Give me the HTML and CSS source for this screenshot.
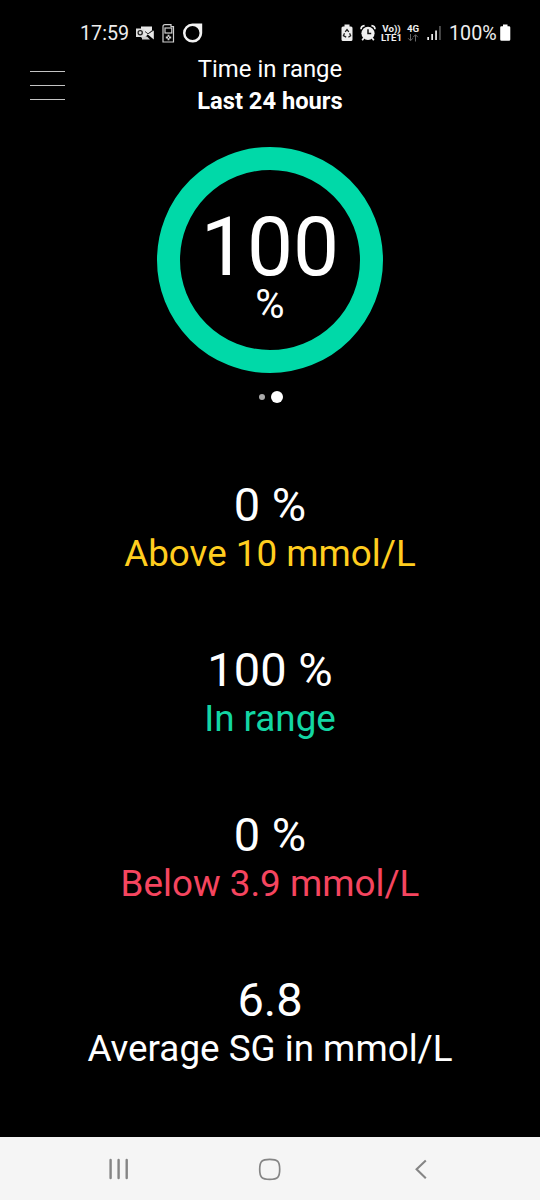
FILE: index.html
```html
<!DOCTYPE html>
<html lang="en">
<head>
<meta charset="utf-8">
<title>Time in range</title>
<link rel="stylesheet" href="styles.css">
</head>
<body>
<div class="screen">
  <div class="status">
    <span class="clock">17:59</span>
    <svg class="mail" width="18" height="22" viewBox="0 0 18 22">
      <path fill="#e8e8e8" d="M5 4.500h11v4l-3.500 3-3.500 4H5z"/>
      <path fill="#e8e8e8" d="M11.500 12.300L17.800 8.500v9z"/>
      <path fill="#ccc" d="M6 14.500h5l3 3H6z"/>
      <path d="M9 9.500l3 2.300 5-3.600" fill="none" stroke="#333" stroke-width="1"/>
      <rect x="0" y="6.500" width="8.500" height="8.500" fill="#ddd"/>
      <circle cx="4.200" cy="10.800" r="2.100" fill="none" stroke="#222" stroke-width="1.300"/>
    </svg>
    <svg class="pump" width="13" height="22" viewBox="0 0 13 22" fill="none" stroke="#d0d0d0">
      <path d="M1 4.500Q1 2.600 3 2.600h6v2h2.500V20H1z" stroke-width="1.200"/>
      <rect x="3" y="6" width="6.800" height="5" stroke-width="1.200"/>
      <path d="M6.500 12.800v5.400M3.800 15.500h5.400" stroke-width="1.800"/>
      <path d="M6.500 14.800v1.400" stroke="#000" stroke-width="1"/>
    </svg>
    <svg class="drop" width="20" height="22" viewBox="0 0 20 22">
      <path fill="#f2f2f2" fill-rule="evenodd" d="M9.500 1.500h9.700v9A9.600 9.500 0 1 1 9.500 1.500zM9.500 4a7 7 0 1 0 0 14 7 7 0 0 0 0-14z"/>
    </svg>
    <svg class="care" width="12" height="22" viewBox="0 0 12 22">
      <path fill="#eee" d="M3.500 2.500h5v2H10q1.500 0 1.500 1.500v11.500Q11.500 19 10 19H2Q.5 19 .5 17.500V6Q.5 4.500 2 4.500h1.500z"/>
      <path d="M4.200 9.800L6 7.600l1.800 2.200M8.600 11.300l1 2.400-2.200 1.500M3.500 11.300l-1.100 2.400 2.800 1.400" fill="none" stroke="#222" stroke-width="1.300"/>
    </svg>
    <svg class="alarm" width="16" height="22" viewBox="0 0 16 22">
      <circle cx="8" cy="11.300" r="6.600" fill="#f0f0f0"/>
      <path d="M1 7.200Q1 4 4.600 3.600M15 7.200Q15 4 11.400 3.600M3.800 16l-1.600 2.300M12.200 16l1.600 2.300" fill="none" stroke="#f0f0f0" stroke-width="1.700"/>
      <path d="M8 7.300v4.300h3.200" fill="none" stroke="#111" stroke-width="1.500"/>
    </svg>
    <span class="volte"><span>Vo))</span><span>LTE1</span></span>
    <span class="net"><span>4G</span>
      <svg width="12" height="8" viewBox="0 0 12 8" fill="none" stroke="#666"><path d="M3.500 0v6.500M1.200 4.300l2.300 2.500 2.300-2.500M8.500 7.500V1M6.200 3.200L8.500.7l2.300 2.500"/></svg>
    </span>
    <svg class="signal" width="15" height="22" viewBox="0 0 15 22">
      <path fill="#eee" d="M.3 15H2v3H.3zM4.300 12H6v6H4.300zM8.200 8.500h1.700V18H8.200z"/><path fill="#555" d="M12.100 4h1.700v14h-1.700z"/>
    </svg>
    <span class="charge">100%</span>
    <svg class="battery" width="11" height="22" viewBox="0 0 11 22">
      <path fill="#fff" d="M3 2.500h4.500v1.800H9q1.300 0 1.300 1.300v11.900q0 1.300-1.300 1.300H1.500Q.2 18.800.2 17.500V5.600q0-1.300 1.300-1.300H3z"/>
    </svg>
  </div>
  <header class="header">
    <div class="menu"><i></i><i></i><i></i></div>
    <div class="title"><div>Time in range</div><div class="period">Last 24 hours</div></div>
  </header>
  <div class="ring">
    <div class="total">100</div>
    <div class="unit">%</div>
  </div>
  <div class="dots"><i class="dot"></i><i class="dot active"></i></div>
  <main class="stats">
    <div><div class="value">0 %</div><div class="label above">Above 10 mmol/L</div></div>
    <div><div class="value">100 %</div><div class="label within">In range</div></div>
    <div><div class="value">0 %</div><div class="label below">Below 3.9 mmol/L</div></div>
    <div><div class="value">6.8</div><div class="label">Average SG in mmol/L</div></div>
  </main>
  <nav class="nav">
    <svg width="24" height="24" viewBox="0 0 24 24"><path d="M3.600 3v18M11.600 3v18M19.700 3v18" stroke="#858585" stroke-width="2.400" stroke-linecap="round"/></svg>
    <svg width="24" height="24" viewBox="0 0 24 24"><path d="M11.700 2.300C19.700 2.300 21.700 4.300 21.700 12.300S19.700 22.300 11.700 22.300 1.700 20.300 1.700 12.300 3.700 2.300 11.700 2.300z" fill="none" stroke="#858585" stroke-width="1.700"/></svg>
    <svg width="24" height="24" viewBox="0 0 24 24"><path d="M16.800 3.500L7.600 12.300l9.200 9" fill="none" stroke="#858585" stroke-width="2.100"/></svg>
  </nav>
</div>
</body>
</html>
```
FILE: styles.css
```css
body {
  margin: 0;
  background: #000;
  color: #fff;
  font-family: Roboto, sans-serif;
}
.screen {
  width: 540px;
  height: 1200px;
  display: flex;
  flex-direction: column;
  overflow: hidden;
}
.status {
  box-sizing: border-box;
  height: 53px;
  padding: 22px 0 0 80px;
  display: flex;
  align-items: flex-start;
}
.status svg { display: block; flex: none; }
.clock, .charge {
  font-size: 19.700px;
  line-height: 24px;
  color: #eee;
  flex: none;
}
.clock { width: 56px; }
.pump { margin-left: 8px; }
.drop { margin-left: 8px; }
.care { margin-left: 138px; }
.alarm { margin-left: 7px; }
.volte, .net {
  display: flex;
  flex-direction: column;
  font-size: 9.700px;
  font-weight: 700;
  line-height: 9px;
  color: #eee;
  align-items: center;
  padding-top: 2px;
}
.volte { width: 21px; margin-left: 5px; }
.net { width: 14px; margin-left: 4px; }
.net svg { margin-top: 1px; }
.signal { margin-left: 7px; }
.charge { width: 50px; margin-left: 7px; }
.battery { margin-left: 0.5px; }
.header {
  height: 94px;
  display: grid;
  grid-template-columns: 197px 146px 1fr;
}
.menu {
  padding: 18px 0 0 30px;
  width: 35px;
  display: flex;
  flex-direction: column;
  gap: 13px;
}
.menu i { height: 1px; background: #c4c4c4; }
.title {
  font-size: 23.900px;
  line-height: 32px;
  text-align: center;
  white-space: nowrap;
}
.period { font-size: 23.700px; font-weight: 700; }
.ring {
  box-sizing: border-box;
  width: 226px;
  height: 226px;
  border: 23px solid #00d9a8;
  border-radius: 50%;
  align-self: center;
  display: flex;
  flex-direction: column;
  align-items: center;
  padding-top: 37px;
}
.total { font-size: 82px; line-height: 80px; }
.unit { font-size: 40px; line-height: 35px; }
.dots {
  height: 104px;
  padding: 18px 0 0 2px;
  box-sizing: border-box;
  display: flex;
  justify-content: center;
  gap: 6px;
}
.dot {
  width: 6px;
  height: 6px;
  margin-top: 3px;
  border-radius: 50%;
  background: #aaa;
}
.dot.active { width: 12px; height: 12px; margin-top: 0; background: #fff; }
.stats {
  height: 660px;
  display: flex;
  flex-direction: column;
  gap: 66px;
  text-align: center;
  white-space: nowrap;
}
.value { font-size: 47px; line-height: 55px; }
.label { font-size: 36.800px; line-height: 44px; }
.above { color: #ffcd1f; }
.within { color: #13d6a3; }
.below { color: #f5455f; }
.nav {
  height: 63px;
  box-sizing: border-box;
  padding: 1px 107px 0;
  background: #f5f5f5;
  display: flex;
  align-items: center;
  justify-content: space-between;
}
```
